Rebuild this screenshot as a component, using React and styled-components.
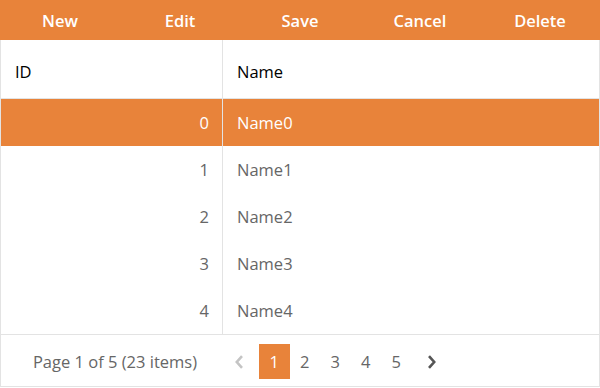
import React from 'react'
import styled, { createGlobalStyle } from 'styled-components'

const GlobalStyle = createGlobalStyle`
  html, body {
    margin: 0;
    padding: 0;
    background: #fff;
  }
  body {
    font-family: "Open Sans", "Noto Sans", sans-serif;
  }
`

const Widget = styled.div`
  width: 600px;
  box-sizing: border-box;
  border: 1px solid #e3e3e3;
  border-top: none;
  display: flex;
  flex-direction: column;
`

const Toolbar = styled.div`
  display: grid;
  grid-template-columns: repeat(5, 1fr);
  height: 40px;
  background: #e8833a;
  margin: 0 -1px;
`

const ToolButton = styled.div`
  display: flex;
  align-items: center;
  justify-content: center;
  color: #fff;
  font-size: 16.5px;
  font-weight: 600;
  cursor: pointer;
`

const Row = styled.div`
  display: grid;
  grid-template-columns: 222px 1fr;
  height: ${p => p.$height}px;
  background: ${p => (p.$selected ? '#e8833a' : '#fff')};
  border-bottom: ${p => (p.$header ? '1px solid #e3e3e3' : 'none')};
`

const Cell = styled.div`
  display: flex;
  align-items: center;
  justify-content: ${p => (p.$right ? 'flex-end' : 'flex-start')};
  padding: 0 13px 0 14px;
  font-size: 16.5px;
  color: ${p => (p.$selected ? '#fff' : p.$header ? '#000' : '#666')};
  border-right: ${p => (p.$divider ? '1px solid #e3e3e3' : 'none')};
  padding-top: ${p => (p.$header ? '4px' : '0')};
`

const Pager = styled.div`
  display: flex;
  align-items: center;
  height: 52px;
  border-top: 1px solid #e3e3e3;
  padding-top: 2px;
  box-sizing: border-box;
`

const PagerInfo = styled.div`
  width: 222px;
  text-align: center;
  font-size: 16.5px;
  color: #666;
  padding-left: 6px;
  box-sizing: border-box;
`

const PageList = styled.div`
  display: flex;
  align-items: center;
  margin-left: 1px;
`

const PageButton = styled.div`
  width: 30.5px;
  height: 35px;
  display: flex;
  align-items: center;
  justify-content: center;
  font-size: 16.5px;
  color: ${p => (p.$active ? '#fff' : '#666')};
  background: ${p => (p.$active ? '#e8833a' : 'transparent')};
`

const ArrowButton = styled(PageButton)`
  width: 30px;
  margin: ${p => (p.$dir === 'left' ? '0 5px 0 0' : '0 0 0 5px')};
`

const Arrow = ({ dir, color }) => (
  <ArrowButton $dir={dir}>
    <svg width="10" height="14" viewBox="0 0 10 14">
      <path
        d={dir === 'left' ? 'M8 1.2 L2.8 7 L8 12.8' : 'M2 1.2 L7.2 7 L2 12.8'}
        fill="none"
        stroke={color}
        strokeWidth="2.6"
      />
    </svg>
  </ArrowButton>
)

const rows = [0, 1, 2, 3, 4]

export default function App() {
  return (
    <>
      <GlobalStyle />
      <Widget>
        <Toolbar>
          {['New', 'Edit', 'Save', 'Cancel', 'Delete'].map(t => (
            <ToolButton key={t}>{t}</ToolButton>
          ))}
        </Toolbar>
        <Row $header $height={58}>
          <Cell $header $divider>ID</Cell>
          <Cell $header>Name</Cell>
        </Row>
        {rows.map(i => (
          <Row key={i} $height={47} $selected={i === 0}>
            <Cell $right $divider $selected={i === 0}>{i}</Cell>
            <Cell $selected={i === 0}>Name{i}</Cell>
          </Row>
        ))}
        <Pager>
          <PagerInfo>Page 1 of 5 (23 items)</PagerInfo>
          <PageList>
            <Arrow dir="left" color="#c4c4c4" />
            {[1, 2, 3, 4, 5].map(n => (
              <PageButton key={n} $active={n === 1}>{n}</PageButton>
            ))}
            <Arrow dir="right" color="#555" />
          </PageList>
        </Pager>
      </Widget>
    </>
  )
}
